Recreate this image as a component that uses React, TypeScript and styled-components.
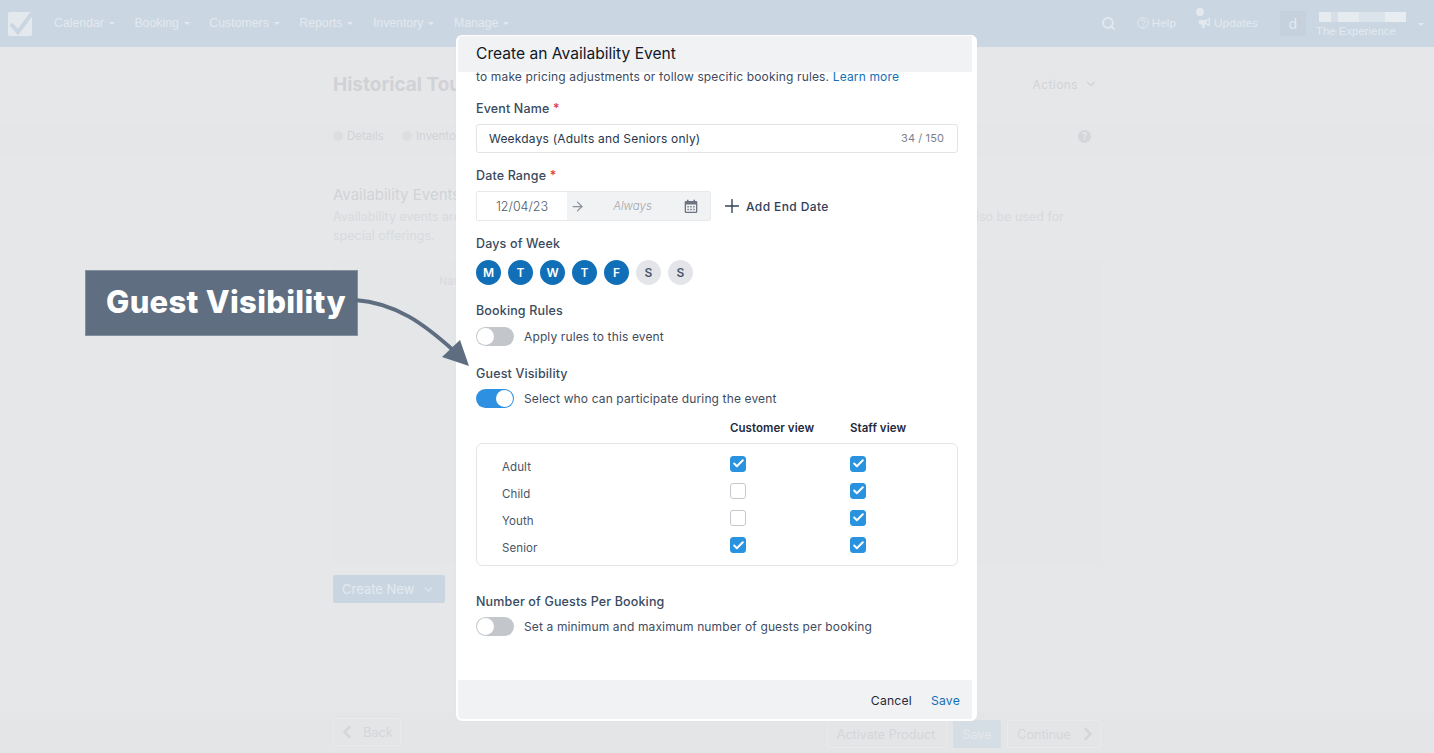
import React from "react";
import styled, { createGlobalStyle } from "styled-components";
import { ArrowRight, Check, ChevronDown, ChevronLeft, ChevronRight, Plus, Search } from "lucide-react";

const Global = createGlobalStyle`
  html, body { margin: 0; padding: 0; height: 100%; overflow: hidden; }
  body { font-family: Inter, "Liberation Sans", sans-serif; background: #e6e7e9; }
  * { box-sizing: border-box; }
`;

const Page = styled.div`
  position: relative;
  width: 1434px;
  height: 753px;
  overflow: hidden;
  display: flex;
  flex-direction: column;
  background: #e6e7e9;
`;

/* ---- Top navigation ---- */
const TopNav = styled.header`
  height: 47px;
  flex: none;
  display: flex;
  align-items: center;
  padding: 0 10px 0 8px;
  background: #cad6e2;
  color: #e3e9ef;
  font: 400 12.3px "Liberation Sans", Arial, sans-serif;
`;
const Logo = styled.div`
  width: 24px;
  height: 24px;
  margin-right: 22px;
  border-radius: 2px;
  background: #e4e9ee;
  display: flex;
  overflow: hidden;
`;
const NavItem = styled.span`
  display: flex;
  align-items: center;
  gap: 5px;
  margin-right: 19.5px;
  margin-top: -1px;
`;
const Caret = styled.i`
  width: 0;
  height: 0;
  border-left: 3px solid transparent;
  border-right: 3px solid transparent;
  border-top: 3px solid #e3e9ef;
  margin-top: 1px;
`;
const NavRight = styled.div`
  margin-left: auto;
  display: flex;
  align-items: center;
`;
const NavTool = styled.span<{ $gap?: number; $mr?: number }>`
  position: relative;
  display: flex;
  align-items: center;
  gap: ${(p) => p.$gap ?? 3}px;
  margin-right: ${(p) => p.$mr ?? 0}px;
  margin-top: -1px;
  font-size: 11.8px;
`;
const Dot = styled.i`
  position: absolute;
  left: -2px;
  top: -8px;
  width: 8px;
  height: 8px;
  border-radius: 50%;
  background: #e3e9ef;
`;
const Avatar = styled.div`
  width: 26px;
  height: 25px;
  margin-right: 10px;
  border-radius: 2px;
  background: #c5d1dd;
  display: flex;
  align-items: center;
  justify-content: center;
  font: 400 15px "Liberation Sans", Arial, sans-serif;
`;
const Account = styled.div`
  width: 90px;
  margin-right: 12px;
  display: flex;
  flex-direction: column;
  margin-top: 2px;
`;
const BlurName = styled.div`
  width: 87px;
  height: 10px;
  margin-left: 3px;
  margin-bottom: 2px;
  background: linear-gradient(90deg, #e6ebf0 0 12px, #d6dfe8 12px 19px, #e6ebf0 19px 40px, #dbe3eb 40px 66px, #e8edf1 66px 87px);
`;
const AccountName = styled.div`
  font-size: 11.4px;
  line-height: 14px;
  white-space: nowrap;
`;

/* ---- Dimmed page behind the dialog ---- */
const Content = styled.main`
  flex: 1;
  display: flex;
  flex-direction: column;
  padding: 0 333px;
  color: #d1d3d7;
`;
const TitleRow = styled.div`
  height: 77px;
  display: flex;
  align-items: center;
  justify-content: space-between;
  padding: 0 3px 3px 0;
`;
const PageTitle = styled.h1`
  margin: 0;
  font-size: 19px;
  font-weight: 700;
  color: #d0d2d6;
  white-space: nowrap;
`;
const Actions = styled.span`
  display: flex;
  align-items: center;
  gap: 6px;
  font-size: 12px;
  letter-spacing: 0.4px;
`;
const TabBar = styled.nav`
  margin: 0 -333px;
  padding: 0 343px 8px 333px;
  height: 31px;
  display: flex;
  align-items: center;
  gap: 18px;
  font-size: 11.5px;
  background: #e5e6e8;
  border-top: 1px solid #e5e6e8;
`;
const Tab = styled.span`
  display: flex;
  align-items: center;
  gap: 4px;
  &::before {
    content: "";
    width: 10px;
    height: 10px;
    border-radius: 50%;
    background: #dcdee1;
  }
`;
const HelpBubble = styled.span`
  margin-left: auto;
  width: 13px;
  height: 13px;
  border-radius: 50%;
  background: #d4d6da;
  color: #e6e7e9;
  font-size: 10px;
  font-weight: 700;
  display: flex;
  align-items: center;
  justify-content: center;
`;
const SectionTitle = styled.h2`
  margin: 30px 0 0;
  font-size: 15px;
  line-height: 20px;
  font-weight: 400;
  color: #d1d3d7;
`;
const SectionText = styled.div`
  font-size: 12.5px;
  line-height: 19px;
  color: #d8dadd;
  margin-top: 2px;
`;
const SplitLine = styled.div`
  display: flex;
  justify-content: space-between;
  padding-right: 37px;
`;
const TablePanel = styled.div`
  height: 300px;
  margin-top: 17px;
  padding: 11px 0 0 105px;
  background: #e5e6e8;
  border: 1px solid #e4e5e7;
  border-radius: 3px;
  font-size: 11px;
  color: #d8dadd;
`;
const CreateButton = styled.div`
  width: 112px;
  height: 28px;
  margin-top: 13px;
  border-radius: 2px;
  background: #c9d6e2;
  color: #e3e9ef;
  font-size: 13px;
  display: flex;
  align-items: center;
  gap: 8px;
  padding-left: 9px;
`;
const PageFooter = styled.footer`
  margin: auto -333px 0;
  padding: 5px 333px 5px;
  height: 41px;
  display: flex;
  align-items: flex-start;
  gap: 6px;
  background: #e4e5e7;
  border-top: 1px solid #e5e6e7;
  color: #d4d6da;
  font-size: 12.6px;
`;
const GhostButton = styled.span<{ $w: number; $spaced?: boolean; $drop?: boolean; $pl?: number; $pr?: number; $gap?: number }>`
  width: ${(p) => p.$w}px;
  height: 28px;
  margin-top: ${(p) => (p.$drop ? 2 : 0)}px;
  margin-left: ${(p) => (p.$spaced ? "auto" : 0)};
  padding: 0 ${(p) => p.$pr ?? 0}px 0 ${(p) => p.$pl ?? 0}px;
  display: flex;
  align-items: center;
  justify-content: center;
  gap: ${(p) => p.$gap ?? 6}px;
  border: 1px solid #e9eaeb;
  border-radius: 2px;
  white-space: nowrap;
`;
const GhostPrimary = styled(GhostButton)`
  background: #d6dee5;
  border-color: #d6dee5;
  color: #e3e8ed;
`;

/* ---- Callout ---- */
const Callout = styled.div`
  position: absolute;
  left: 85px;
  top: 270px;
  width: 273px;
  height: 66px;
  background: #5f6f81;
  border: 1px solid #8290a0;
  color: #fff;
  font: 800 31px Inter, "Open Sans", sans-serif;
  letter-spacing: 0.3px;
  padding: 0 0 3px 20px;
  display: flex;
  align-items: center;
  white-space: nowrap;
`;
const ArrowArt = styled.svg`
  position: absolute;
  left: 350px;
  top: 290px;
  z-index: 3;
`;

/* ---- Dialog ---- */
const Dialog = styled.section`
  position: absolute;
  z-index: 2;
  left: 456px;
  top: 35px;
  width: 521px;
  height: 686px;
  background: #fff;
  border: 2px solid #fff;
  border-top-width: 1px;
  border-radius: 6px;
  box-shadow: 0 0 1px #d5d7da;
  overflow: hidden;
  display: flex;
  flex-direction: column;
  color: #2f3f55;
`;
const DialogHead = styled.div`
  position: relative;
  z-index: 1;
  flex: none;
  height: 36px;
  margin-right: 3px;
  padding: 0 18px 2px;
  display: flex;
  align-items: center;
  background: #f1f2f4;
  color: #111827;
  font-size: 15.6px;
`;
const DialogBody = styled.div`
  flex: 1;
  padding: 0 18px;
  overflow: hidden;
`;
const Intro = styled.p`
  margin: -5px 0 0;
  font-size: 12px;
  line-height: 20px;
  letter-spacing: 0.15px;
  color: #3b4a5f;
  white-space: nowrap;
`;
const TextLink = styled.a`
  color: #1070b8;
`;
const Label = styled.div<{ $mt: number }>`
  margin-top: ${(p) => p.$mt}px;
  font-size: 12.5px;
  line-height: 16px;
  font-weight: 500;
  letter-spacing: 0.15px;
  color: #3a4a60;
`;
const Req = styled.span`
  color: #e0323c;
`;
const TextField = styled.div`
  width: 482px;
  height: 29px;
  margin-top: 7px;
  padding: 0 13px 1px 12px;
  display: flex;
  align-items: center;
  justify-content: space-between;
  border: 1px solid #e1e3e6;
  border-radius: 3px;
  font-size: 12px;
  letter-spacing: 0.2px;
  color: #27364b;
`;
const Counter = styled.span`
  font-size: 11px;
  letter-spacing: 0.1px;
  color: #7b828c;
`;
const DateRow = styled.div`
  display: flex;
  align-items: center;
  margin-top: 7px;
`;
const DateField = styled.div`
  width: 235px;
  height: 30px;
  display: flex;
  align-items: center;
  border: 1px solid #e8e9eb;
  border-radius: 2px;
  background: #f1f2f3;
`;
const DateStart = styled.span`
  width: 90px;
  height: 100%;
  background: #fff;
  display: flex;
  align-items: center;
  justify-content: center;
  font-size: 12.5px;
  font-weight: 300;
  color: #4f5a68;
`;
const DateEnd = styled.span`
  flex: 1;
  text-align: center;
  padding-right: 4px;
  font-size: 11.5px;
  font-style: italic;
  font-weight: 300;
  color: #a3a8af;
`;
const AddDate = styled.span`
  margin-left: 10px;
  display: flex;
  align-items: center;
  gap: 3px;
  font-size: 12px;
  font-weight: 500;
  letter-spacing: 0.4px;
  color: #2f415a;
`;
const Days = styled.div`
  display: flex;
  gap: 7px;
  margin-top: 8px;
`;
const Day = styled.span<{ $on?: boolean }>`
  width: 25px;
  height: 25px;
  border-radius: 50%;
  display: flex;
  align-items: center;
  justify-content: center;
  font-size: 12px;
  font-weight: 600;
  background: ${(p) => (p.$on ? "#116fb7" : "#e3e5e8")};
  color: ${(p) => (p.$on ? "#fff" : "#4b5768")};
`;
const ToggleRow = styled.div<{ $mt: number }>`
  display: flex;
  align-items: center;
  gap: 10px;
  margin-top: ${(p) => p.$mt}px;
  font-size: 12px;
  letter-spacing: 0.13px;
  color: #3f4c60;
  line-height: 19px;
`;
const Toggle = styled.span<{ $on?: boolean }>`
  width: 38px;
  height: 19px;
  border-radius: 10px;
  padding: 1px;
  display: flex;
  justify-content: ${(p) => (p.$on ? "flex-end" : "flex-start")};
  background: ${(p) => (p.$on ? "#2e90e0" : "#c3c7cb")};
  &::after {
    content: "";
    width: 17px;
    height: 17px;
    border-radius: 50%;
    background: #fff;
  }
`;
const ColumnHeads = styled.div`
  display: grid;
  grid-template-columns: 254px 120px auto;
  margin-top: 12px;
  font-size: 11.5px;
  line-height: 16px;
  font-weight: 600;
  letter-spacing: 0.05px;
  color: #1f2a3c;
`;
const Matrix = styled.div`
  width: 482px;
  height: 123px;
  margin-top: 7px;
  padding: 6px 0 0 25px;
  border: 1px solid #e3e5e8;
  border-radius: 6px;
`;
const MatrixRow = styled.div`
  display: grid;
  grid-template-columns: 228px 120px 16px;
  height: 27.2px;
  align-items: center;
  font-size: 11.5px;
  letter-spacing: 0.1px;
  color: #485567;
`;
const RowName = styled.span`
  padding-top: 6px;
`;
const Box = styled.span<{ $on?: boolean }>`
  width: 16px;
  height: 16px;
  border-radius: 3px;
  display: flex;
  align-items: center;
  justify-content: center;
  background: ${(p) => (p.$on ? "#2a93e0" : "#fff")};
  border: 1px solid ${(p) => (p.$on ? "#2a93e0" : "#c5c9cf")};
  color: #fff;
`;
const DialogFoot = styled.div`
  flex: none;
  height: 39px;
  margin-right: 3px;
  padding: 1px 12px 0 0;
  display: flex;
  align-items: center;
  justify-content: flex-end;
  gap: 19px;
  background: #f1f2f4;
  font-size: 12.2px;
  letter-spacing: 0.2px;
  color: #1f2937;
`;
const SaveLink = styled.span`
  color: #1070b8;
`;

const rows: [string, boolean][] = [
  ["Adult", true],
  ["Child", false],
  ["Youth", false],
  ["Senior", true],
];

const Tick = () => <Check size={13} strokeWidth={3.6} />;

export default function App() {
  return (
    <Page>
      <Global />
      <TopNav>
        <Logo>
          <svg width="24" height="24" viewBox="0 0 24 24">
            <path d="M3 12 L10 20 L25 0" fill="none" stroke="#cad6e2" strokeWidth="4" />
          </svg>
        </Logo>
        {["Calendar", "Booking", "Customers", "Reports", "Inventory", "Manage"].map((n) => (
          <NavItem key={n}>
            {n}
            <Caret />
          </NavItem>
        ))}
        <NavRight>
          <NavTool $mr={21}>
            <Search size={15} strokeWidth={2.8} />
          </NavTool>
          <NavTool $mr={22}>
            <svg width="12" height="12" viewBox="0 0 12 12" fill="none" stroke="#e3e9ef" strokeWidth="1">
              <circle cx="6" cy="6" r="5.3" />
              <path d="M4.3 4.6a1.8 1.8 0 1 1 2.6 1.6c-.6.3-.9.6-.9 1.3" />
              <circle cx="6" cy="9" r=".4" />
            </svg>
            Help
          </NavTool>
          <NavTool $mr={22}>
            <Dot />
            <svg width="13" height="12" viewBox="0 0 13 12" fill="#e3e9ef">
              <path d="M12 .5v9L8 7.4H6.2L7 11H4.6L3.8 7.4H2.6A1.9 1.9 0 0 1 .7 5.4v-.5c0-1 .9-1.9 1.9-1.9H8z" />
              <path d="M10.7 2.6 8.8 3.8v2.7l1.9 1.1z" fill="#cad6e2" />
            </svg>
            Updates
          </NavTool>
          <Avatar>d</Avatar>
          <Account>
            <BlurName />
            <AccountName>The Experience</AccountName>
          </Account>
          <Caret />
        </NavRight>
      </TopNav>

      <Content>
        <TitleRow>
          <PageTitle>Historical Tours</PageTitle>
          <Actions>
            Actions
            <ChevronDown size={14} />
          </Actions>
        </TitleRow>
        <TabBar>
          <Tab>Details</Tab>
          <Tab>Inventory</Tab>
          <HelpBubble>?</HelpBubble>
        </TabBar>
        <SectionTitle>Availability Events</SectionTitle>
        <SectionText>
          <SplitLine>
            <span>Availability events are</span>
            <span>also be used for</span>
          </SplitLine>
          special offerings.
        </SectionText>
        <TablePanel>Name</TablePanel>
        <CreateButton>
          Create New
          <ChevronDown size={13} />
        </CreateButton>
        <PageFooter>
          <GhostButton $w={68} $pr={4}>
            <ChevronLeft size={20} strokeWidth={3} />
            Back
          </GhostButton>
          <GhostButton $w={120} $spaced $drop $pr={2}>
            Activate Product
          </GhostButton>
          <GhostPrimary $w={48} $drop>
            Save
          </GhostPrimary>
          <GhostButton $w={94} $drop $pl={7} $gap={7}>
            Continue
            <ChevronRight size={20} strokeWidth={3} />
          </GhostButton>
        </PageFooter>
      </Content>

      <Callout>Guest Visibility</Callout>
      <ArrowArt width="130" height="85" viewBox="0 0 130 85">
        <path d="M5 10 C46 13 74 34 103 60" fill="none" stroke="#5e6e80" strokeWidth="4" />
        <path d="M110 50 L92 67 L119 76 Z" fill="#5e6e80" />
      </ArrowArt>

      <Dialog>
        <DialogHead>Create an Availability Event</DialogHead>
        <DialogBody>
          <Intro>
            to make pricing adjustments or follow specific booking rules. <TextLink>Learn more</TextLink>
          </Intro>
          <Label $mt={14}>
            Event Name <Req>*</Req>
          </Label>
          <TextField>
            Weekdays (Adults and Seniors only)
            <Counter>34 / 150</Counter>
          </TextField>
          <Label $mt={15}>
            Date Range <Req>*</Req>
          </Label>
          <DateRow>
            <DateField>
              <DateStart>12/04/23</DateStart>
              <ArrowRight size={15} color="#8b929b" style={{ marginLeft: 3 }} />
              <DateEnd>Always</DateEnd>
              <svg width="14" height="15" viewBox="0 0 14 15" style={{ marginRight: 12 }}>
                <path
                  d="M2 2h1V.7h1.5V2h5V.7H11V2h1a1.3 1.3 0 0 1 1.3 1.3v9.4A1.3 1.3 0 0 1 12 14H2a1.3 1.3 0 0 1-1.3-1.3V3.3A1.3 1.3 0 0 1 2 2z"
                  fill="#6b7480"
                />
                <path d="M2 5.4h10v7.3H2z" fill="#f1f2f3" />
                <path d="M3.4 7h1.4v1.4H3.4zM6.3 7h1.4v1.4H6.3zM9.2 7h1.4v1.4H9.2zM3.4 9.8h1.4v1.4H3.4zM6.3 9.8h1.4v1.4H6.3zM9.2 9.8h1.4v1.4H9.2z" fill="#6b7480" />
              </svg>
            </DateField>
            <AddDate>
              <Plus size={22} strokeWidth={1.5} />
              Add End Date
            </AddDate>
          </DateRow>
          <Label $mt={15}>Days of Week</Label>
          <Days>
            {["M", "T", "W", "T", "F"].map((d, i) => (
              <Day key={i} $on>
                {d}
              </Day>
            ))}
            <Day>S</Day>
            <Day>S</Day>
          </Days>
          <Label $mt={18}>Booking Rules</Label>
          <ToggleRow $mt={8}>
            <Toggle />
            Apply rules to this event
          </ToggleRow>
          <Label $mt={20}>Guest Visibility</Label>
          <ToggleRow $mt={7}>
            <Toggle $on />
            Select who can participate during the event
          </ToggleRow>
          <ColumnHeads>
            <span />
            <span>Customer view</span>
            <span>Staff view</span>
          </ColumnHeads>
          <Matrix>
            {rows.map(([name, customer]) => (
              <MatrixRow key={name}>
                <RowName>{name}</RowName>
                <Box $on={customer}>{customer && <Tick />}</Box>
                <Box $on>
                  <Tick />
                </Box>
              </MatrixRow>
            ))}
          </Matrix>
          <Label $mt={28}>Number of Guests Per Booking</Label>
          <ToggleRow $mt={7}>
            <Toggle />
            Set a minimum and maximum number of guests per booking
          </ToggleRow>
        </DialogBody>
        <DialogFoot>
          Cancel
          <SaveLink>Save</SaveLink>
        </DialogFoot>
      </Dialog>
    </Page>
  );
}
